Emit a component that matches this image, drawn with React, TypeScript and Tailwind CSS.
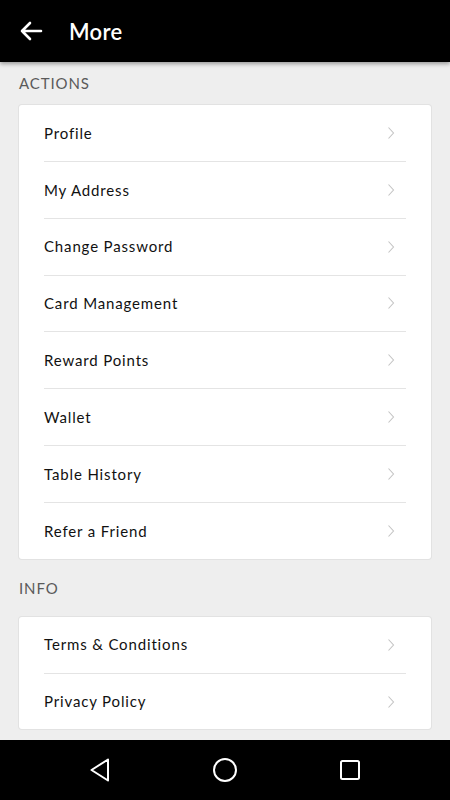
import React from "react";

const Chevron: React.FC = () => (
  <svg width="8" height="14" viewBox="0 0 8 14" fill="none" className="shrink-0">
    <path d="M1.5 1.5 L6.5 7 L1.5 12.5" stroke="#c4c4c4" strokeWidth="1.1" />
  </svg>
);

const Row: React.FC<{ label: string; last?: boolean }> = ({ label, last }) => (
  <div className="mx-[25px]">
    <div className="flex h-[55.85px] items-center justify-between pr-[11px]">
      <span className="text-[15px] tracking-[0.85px] text-[#111]">{label}</span>
      <Chevron />
    </div>
    {!last && <div className="h-px bg-[#e4e4e4]" />}
  </div>
);

const Section: React.FC<{ title: string; items: string[]; first?: boolean }> = ({ title, items, first }) => (
  <div>
    <div className={`${first ? "h-[43px]" : "h-[58px]"} flex items-center px-[19px] text-[15px] tracking-[0.9px] text-[#5a5a5a]`}>
      {title}
    </div>
    <div className="mx-[19px] rounded-[3px] bg-white shadow-[0_0_0_1px_#e2e2e2]">
      {items.map((it, i) => (
        <Row key={it} label={it} last={i === items.length - 1} />
      ))}
    </div>
  </div>
);

const App: React.FC = () => {
  const actions = [
    "Profile",
    "My Address",
    "Change Password",
    "Card Management",
    "Reward Points",
    "Wallet",
    "Table History",
    "Refer a Friend",
  ];
  const info = ["Terms & Conditions", "Privacy Policy"];

  return (
    <div className="flex h-[800px] w-[450px] flex-col overflow-hidden bg-[#eeeeee]" style={{ fontFamily: "Lato, 'Open Sans', sans-serif" }}>
      {/* Top bar */}
      <div className="relative z-10 flex h-[62px] shrink-0 items-center bg-black shadow-[0_2px_4px_rgba(0,0,0,0.35)]">
        <svg width="24" height="22" viewBox="0 0 24 22" fill="none" className="ml-[19px]">
          <path d="M22 11 H3 M11 3 L3 11 L11 19" stroke="white" strokeWidth="2.6" strokeLinecap="round" strokeLinejoin="round" />
        </svg>
        <span className="ml-[26px] text-[22px] font-semibold tracking-[0.3px] text-white">More</span>
      </div>

      {/* Content */}
      <div className="flex-1">
        <Section title="ACTIONS" items={actions} first />
        <Section title="INFO" items={info} />
      </div>

      {/* Android nav bar */}
      <div className="flex h-[60px] shrink-0 items-center justify-center bg-black">
        <div className="flex w-[125px] justify-center">
          <svg width="22" height="26" viewBox="0 0 22 26" fill="none">
            <path d="M19 2.5 L2.5 13 L19 23.5 Z" stroke="white" strokeWidth="2" strokeLinejoin="round" />
          </svg>
        </div>
        <div className="flex w-[125px] justify-center">
          <svg width="26" height="26" viewBox="0 0 26 26" fill="none">
            <circle cx="13" cy="13" r="11" stroke="white" strokeWidth="2" />
          </svg>
        </div>
        <div className="flex w-[125px] justify-center">
          <svg width="22" height="22" viewBox="0 0 22 22" fill="none">
            <rect x="2" y="2" width="18" height="18" rx="1.5" stroke="white" strokeWidth="2" />
          </svg>
        </div>
      </div>
    </div>
  );
};

export default App;
